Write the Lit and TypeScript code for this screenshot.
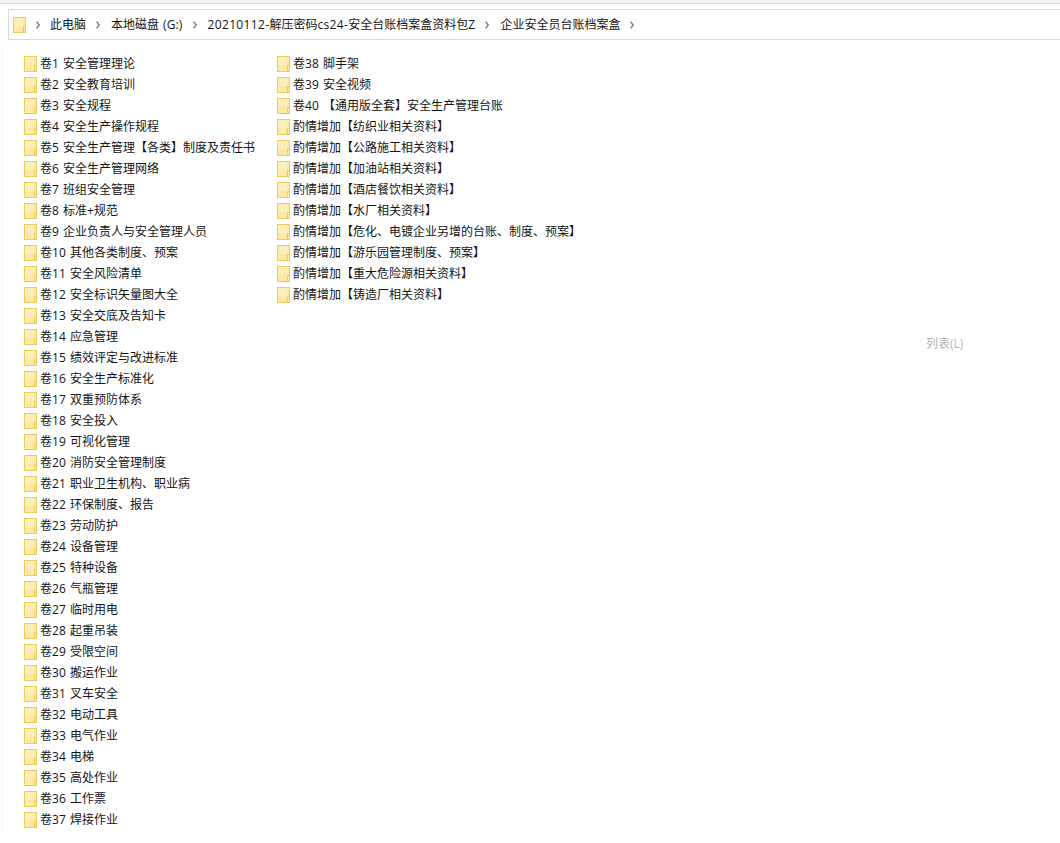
import { LitElement, html, css, svg } from "lit";
import { customElement } from "lit/decorators.js";

const col1 = ["卷1 安全管理理论","卷2 安全教育培训","卷3 安全规程","卷4 安全生产操作规程","卷5 安全生产管理【各类】制度及责任书","卷6 安全生产管理网络","卷7 班组安全管理","卷8 标准+规范","卷9 企业负责人与安全管理人员","卷10 其他各类制度、预案","卷11 安全风险清单","卷12 安全标识矢量图大全","卷13 安全交底及告知卡","卷14 应急管理","卷15 绩效评定与改进标准","卷16 安全生产标准化","卷17 双重预防体系","卷18 安全投入","卷19 可视化管理","卷20 消防安全管理制度","卷21 职业卫生机构、职业病","卷22 环保制度、报告","卷23 劳动防护","卷24 设备管理","卷25 特种设备","卷26 气瓶管理","卷27 临时用电","卷28 起重吊装","卷29 受限空间","卷30 搬运作业","卷31 叉车安全","卷32 电动工具","卷33 电气作业","卷34 电梯","卷35 高处作业","卷36 工作票","卷37 焊接作业"];
const col2 = ["卷38 脚手架","卷39 安全视频","卷40 【通用版全套】安全生产管理台账","酌情增加【纺织业相关资料】","酌情增加【公路施工相关资料】","酌情增加【加油站相关资料】","酌情增加【酒店餐饮相关资料】","酌情增加【水厂相关资料】","酌情增加【危化、电镀企业另增的台账、制度、预案】","酌情增加【游乐园管理制度、预案】","酌情增加【重大危险源相关资料】","酌情增加【铸造厂相关资料】"];
const crumbs = ["此电脑","本地磁盘 (G:)","20210112-解压密码cs24-安全台账档案盒资料包Z","企业安全员台账档案盒"];

const folder = (cls: string) => svg`<svg class=${cls} viewBox="0 0 13 16" width="13" height="16">
  <rect x="0" y="0" width="13" height="16" fill="#eecb5e"/>
  <rect x="1" y="1" width="11" height="14" fill="#fde9a4"/>
  <rect x="1" y="1" width="9" height="8" fill="#feefc0" opacity=".7"/>
  <path d="M10.5 15V9.5h1.5" fill="none" stroke="#eecb5e" stroke-width="1"/>
</svg>`;
const chev = svg`<svg class="chev" viewBox="0 0 4 8" width="4" height="8"><path d="M.6.6 3.2 4 .6 7.4" fill="none" stroke="#808080" stroke-width="1.5"/></svg>`;

/* Latin runs get the slightly wider advance of the reference's UI font. */
const label = (t: string) =>
  t.split(/([\x20-\x7e]+)/).map((p, i) => (i % 2 ? html`<span class="lat">${p}</span>` : p));

@customElement("app-root")
export class AppRoot extends LitElement {
  static styles = css`
    :host { display: block; width: 1060px; height: 843px; background: #fff; overflow: hidden; position: relative;
      font: 12px "Open Sans", "Noto Sans CJK SC", sans-serif; color: #141414; }
    .lat { letter-spacing: .14px; word-spacing: .75px; }
    .top { height: 3px; background: #f1f2f4; border-bottom: 1px solid #d9d9d9; }
    .path { margin: 5px 0 0 8px; height: 29px; border: 1px solid #d9d9d9; border-right: 0; display: flex; align-items: center; padding-left: 4px; }
    .pf { margin-right: 10px; }
    .crumb { margin: 0 10px 0 11px; white-space: nowrap; padding-bottom: 2px; }
    .crumb:first-of-type { margin-left: 10px; }
    .crumb:nth-of-type(3) .lat { letter-spacing: .34px; }
    .chev { flex: none; }
    .body { margin: 7px 0 0 2px; height: 785px; border-left: 1px solid #f6f6f6; padding: 6px 0 0 21px; box-sizing: border-box; }
    .grid { display: grid; grid-auto-flow: column; grid-template-rows: repeat(37, 21px); grid-template-columns: 253px 1fr; }
    .item { display: flex; align-items: center; white-space: nowrap; }
    .item svg { margin-right: 3px; flex: none; }
    .txt { padding-bottom: 2px; }
    .hint { position: absolute; left: 926px; top: 334px; color: #b4b4b4; }
  `;
  render() {
    return html`
      <div class="top"></div>
      <div class="path">
        ${folder("pf")}
        ${chev}
        ${crumbs.map(c => html`<span class="crumb">${label(c)}</span>${chev}`)}
      </div>
      <div class="body">
        <div class="grid">
          ${[...col1, ...col2].map(t => html`<div class="item">${folder("fi")}<span class="txt">${label(t)}</span></div>`)}
        </div>
      </div>
      <div class="hint">列表(L)</div>
    `;
  }
}
